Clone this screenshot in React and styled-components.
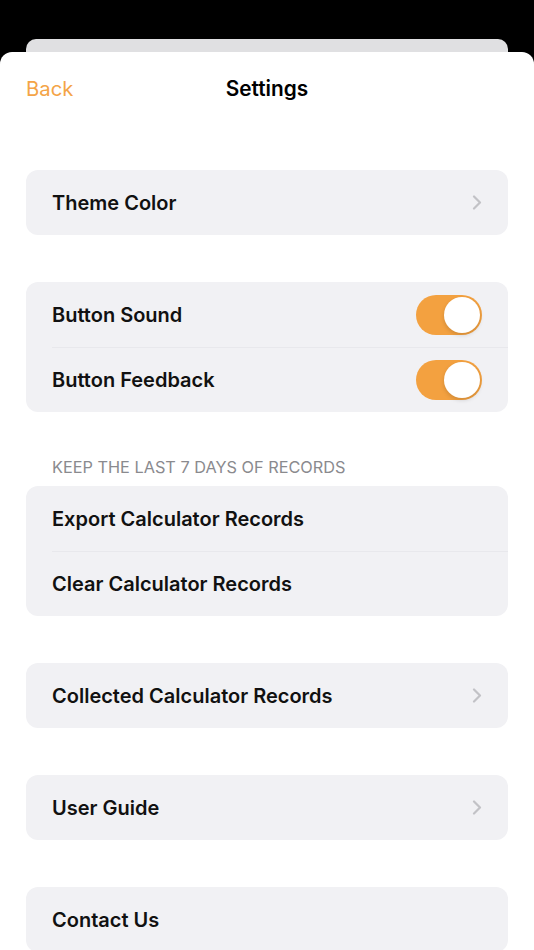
import React from "react";
import styled, { createGlobalStyle } from "styled-components";

const GlobalStyle = createGlobalStyle`
  html, body {
    margin: 0;
    padding: 0;
    background: #000;
    font-family: Inter, "Noto Sans", "Liberation Sans", sans-serif;
    -webkit-font-smoothing: antialiased;
  }
`;

const Screen = styled.div`
  width: 534px;
  height: 950px;
  overflow: hidden;
  background: #000;
  padding-top: 39px;
  box-sizing: border-box;
`;

const BackCard = styled.div`
  margin: 0 26px;
  height: 24px;
  background: #e0e0e2;
  border-radius: 10px 10px 0 0;
`;

const Sheet = styled.div`
  margin-top: -11px;
  position: relative;
  background: #fff;
  border-radius: 12px 12px 0 0;
  min-height: 900px;
  padding: 0 26px;
`;

const NavBar = styled.div`
  height: 72px;
  display: flex;
  align-items: center;
  justify-content: center;
  position: relative;
`;

const BackButton = styled.span`
  position: absolute;
  left: 0;
  top: 24px;
  font-size: 20.3px;
  color: #f4a447;
`;

const Title = styled.h1`
  margin: 0;
  font-size: 20.8px;
  font-weight: 600;
  color: #000;
`;

const Group = styled.div`
  margin-top: ${(p) => p.$gap}px;
  background: #f1f1f4;
  border-radius: 12px;
  overflow: hidden;
`;

const Row = styled.div`
  height: 65px;
  display: flex;
  align-items: center;
  justify-content: space-between;
  padding: 0 26px;
  position: relative;
  & + &::before {
    content: "";
    position: absolute;
    top: 0;
    left: 26px;
    right: 0;
    height: 1px;
    background: #e8e8ec;
  }
`;

const Label = styled.span`
  font-size: 20px;
  font-weight: 600;
  color: #111;
`;

const SectionHeader = styled.div`
  margin-top: 46px;
  padding-left: 26px;
  font-size: 16.3px;
  color: #8a8a8e;
  line-height: 18px;
`;

const Toggle = styled.div`
  width: 66px;
  height: 40px;
  border-radius: 20px;
  background: #f3a140;
  position: relative;
  &::after {
    content: "";
    position: absolute;
    right: 2px;
    top: 2px;
    width: 36px;
    height: 36px;
    border-radius: 50%;
    background: #fff;
    box-shadow: 0 2px 4px rgba(0, 0, 0, 0.15);
  }
`;

const Chevron = () => (
  <svg width="10" height="15" viewBox="0 0 10 15">
    <path d="M2 1.5 L8 7.5 L2 13.5" fill="none" stroke="#c2c2c6" strokeWidth="2.2" strokeLinecap="round" strokeLinejoin="round" />
  </svg>
);

export default function App() {
  return (
    <Screen>
      <GlobalStyle />
      <BackCard />
      <Sheet>
        <NavBar>
          <BackButton>Back</BackButton>
          <Title>Settings</Title>
        </NavBar>

        <Group $gap={46}>
          <Row>
            <Label>Theme Color</Label>
            <Chevron />
          </Row>
        </Group>

        <Group $gap={47}>
          <Row>
            <Label>Button Sound</Label>
            <Toggle />
          </Row>
          <Row>
            <Label>Button Feedback</Label>
            <Toggle />
          </Row>
        </Group>

        <SectionHeader>KEEP THE LAST 7 DAYS OF RECORDS</SectionHeader>
        <Group $gap={10}>
          <Row>
            <Label>Export Calculator Records</Label>
          </Row>
          <Row>
            <Label>Clear Calculator Records</Label>
          </Row>
        </Group>

        <Group $gap={47}>
          <Row>
            <Label>Collected Calculator Records</Label>
            <Chevron />
          </Row>
        </Group>

        <Group $gap={47}>
          <Row>
            <Label>User Guide</Label>
            <Chevron />
          </Row>
        </Group>

        <Group $gap={47}>
          <Row>
            <Label>Contact Us</Label>
          </Row>
        </Group>
      </Sheet>
    </Screen>
  );
}
